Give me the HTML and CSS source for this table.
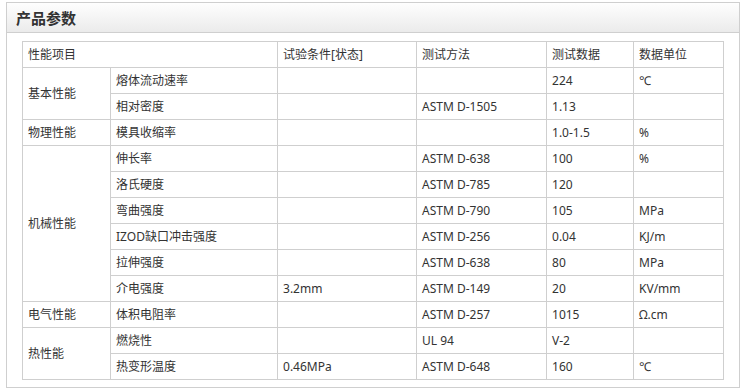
FILE: index.html
```html
<!DOCTYPE html>
<html lang="zh-CN">
<head>
<meta charset="utf-8">
<title>产品参数</title>
<link rel="stylesheet" href="styles.css">
</head>
<body>
<div class="panel">
  <div class="panel-head">产品参数</div>
  <div class="panel-body">
    <table class="params">
      <colgroup>
        <col class="c1"><col class="c2"><col class="c3"><col class="c4"><col class="c5"><col class="c6">
      </colgroup>
      <tr><td colspan="2">性能项目</td><td>试验条件[状态]</td><td>测试方法</td><td>测试数据</td><td>数据单位</td></tr>
      <tr><td rowspan="2">基本性能</td><td>熔体流动速率</td><td></td><td></td><td>224</td><td>℃</td></tr>
      <tr><td>相对密度</td><td></td><td>ASTM D-1505</td><td>1.13</td><td></td></tr>
      <tr><td>物理性能</td><td>模具收缩率</td><td></td><td></td><td>1.0-1.5</td><td>%</td></tr>
      <tr><td rowspan="6">机械性能</td><td>伸长率</td><td></td><td>ASTM D-638</td><td>100</td><td>%</td></tr>
      <tr><td>洛氏硬度</td><td></td><td>ASTM D-785</td><td>120</td><td></td></tr>
      <tr><td>弯曲强度</td><td></td><td>ASTM D-790</td><td>105</td><td>MPa</td></tr>
      <tr><td>IZOD缺口冲击强度</td><td></td><td>ASTM D-256</td><td>0.04</td><td>KJ/m</td></tr>
      <tr><td>拉伸强度</td><td></td><td>ASTM D-638</td><td>80</td><td>MPa</td></tr>
      <tr><td>介电强度</td><td>3.2mm</td><td>ASTM D-149</td><td>20</td><td>KV/mm</td></tr>
      <tr><td>电气性能</td><td>体积电阻率</td><td></td><td>ASTM D-257</td><td>1015</td><td>Ω.cm</td></tr>
      <tr><td rowspan="2">热性能</td><td>燃烧性</td><td></td><td>UL 94</td><td>V-2</td><td></td></tr>
      <tr><td>热变形温度</td><td>0.46MPa</td><td>ASTM D-648</td><td>160</td><td>℃</td></tr>
    </table>
  </div>
</div>
</body>
</html>
```
FILE: styles.css
```css
html, body {
  margin: 0;
  padding: 0;
  background: #fff;
}
body {
  font-family: "Noto Sans", "Noto Sans CJK SC", sans-serif;
  font-size: 12px;
  color: #333;
}
.panel {
  margin: 2px 0 0 6px;
  width: 732px;
  border: 1px solid #cfcfcf;
}
.panel-head {
  height: 29px;
  line-height: 29px;
  padding-left: 9px;
  border-bottom: 1px solid #cfcfcf;
  background: linear-gradient(#fefefe, #ebebeb);
  font-family: "Noto Sans CJK SC", sans-serif;
  font-size: 15px;
  font-weight: bold;
  color: #333;
}
.panel-body {
  padding: 8px 16px 7px 15px;
}
.params {
  border-collapse: collapse;
  table-layout: fixed;
  width: 701px;
}
.c1 { width: 88px; }
.c2 { width: 167px; }
.c3 { width: 139px; }
.c4 { width: 130px; }
.c5 { width: 87px; }
.c6 { width: 90px; }
.params td {
  border: 1px solid #cfcfcf;
  height: 25px;
  padding: 0 5px;
  vertical-align: middle;
  white-space: nowrap;
  line-height: 16px;
}
```
